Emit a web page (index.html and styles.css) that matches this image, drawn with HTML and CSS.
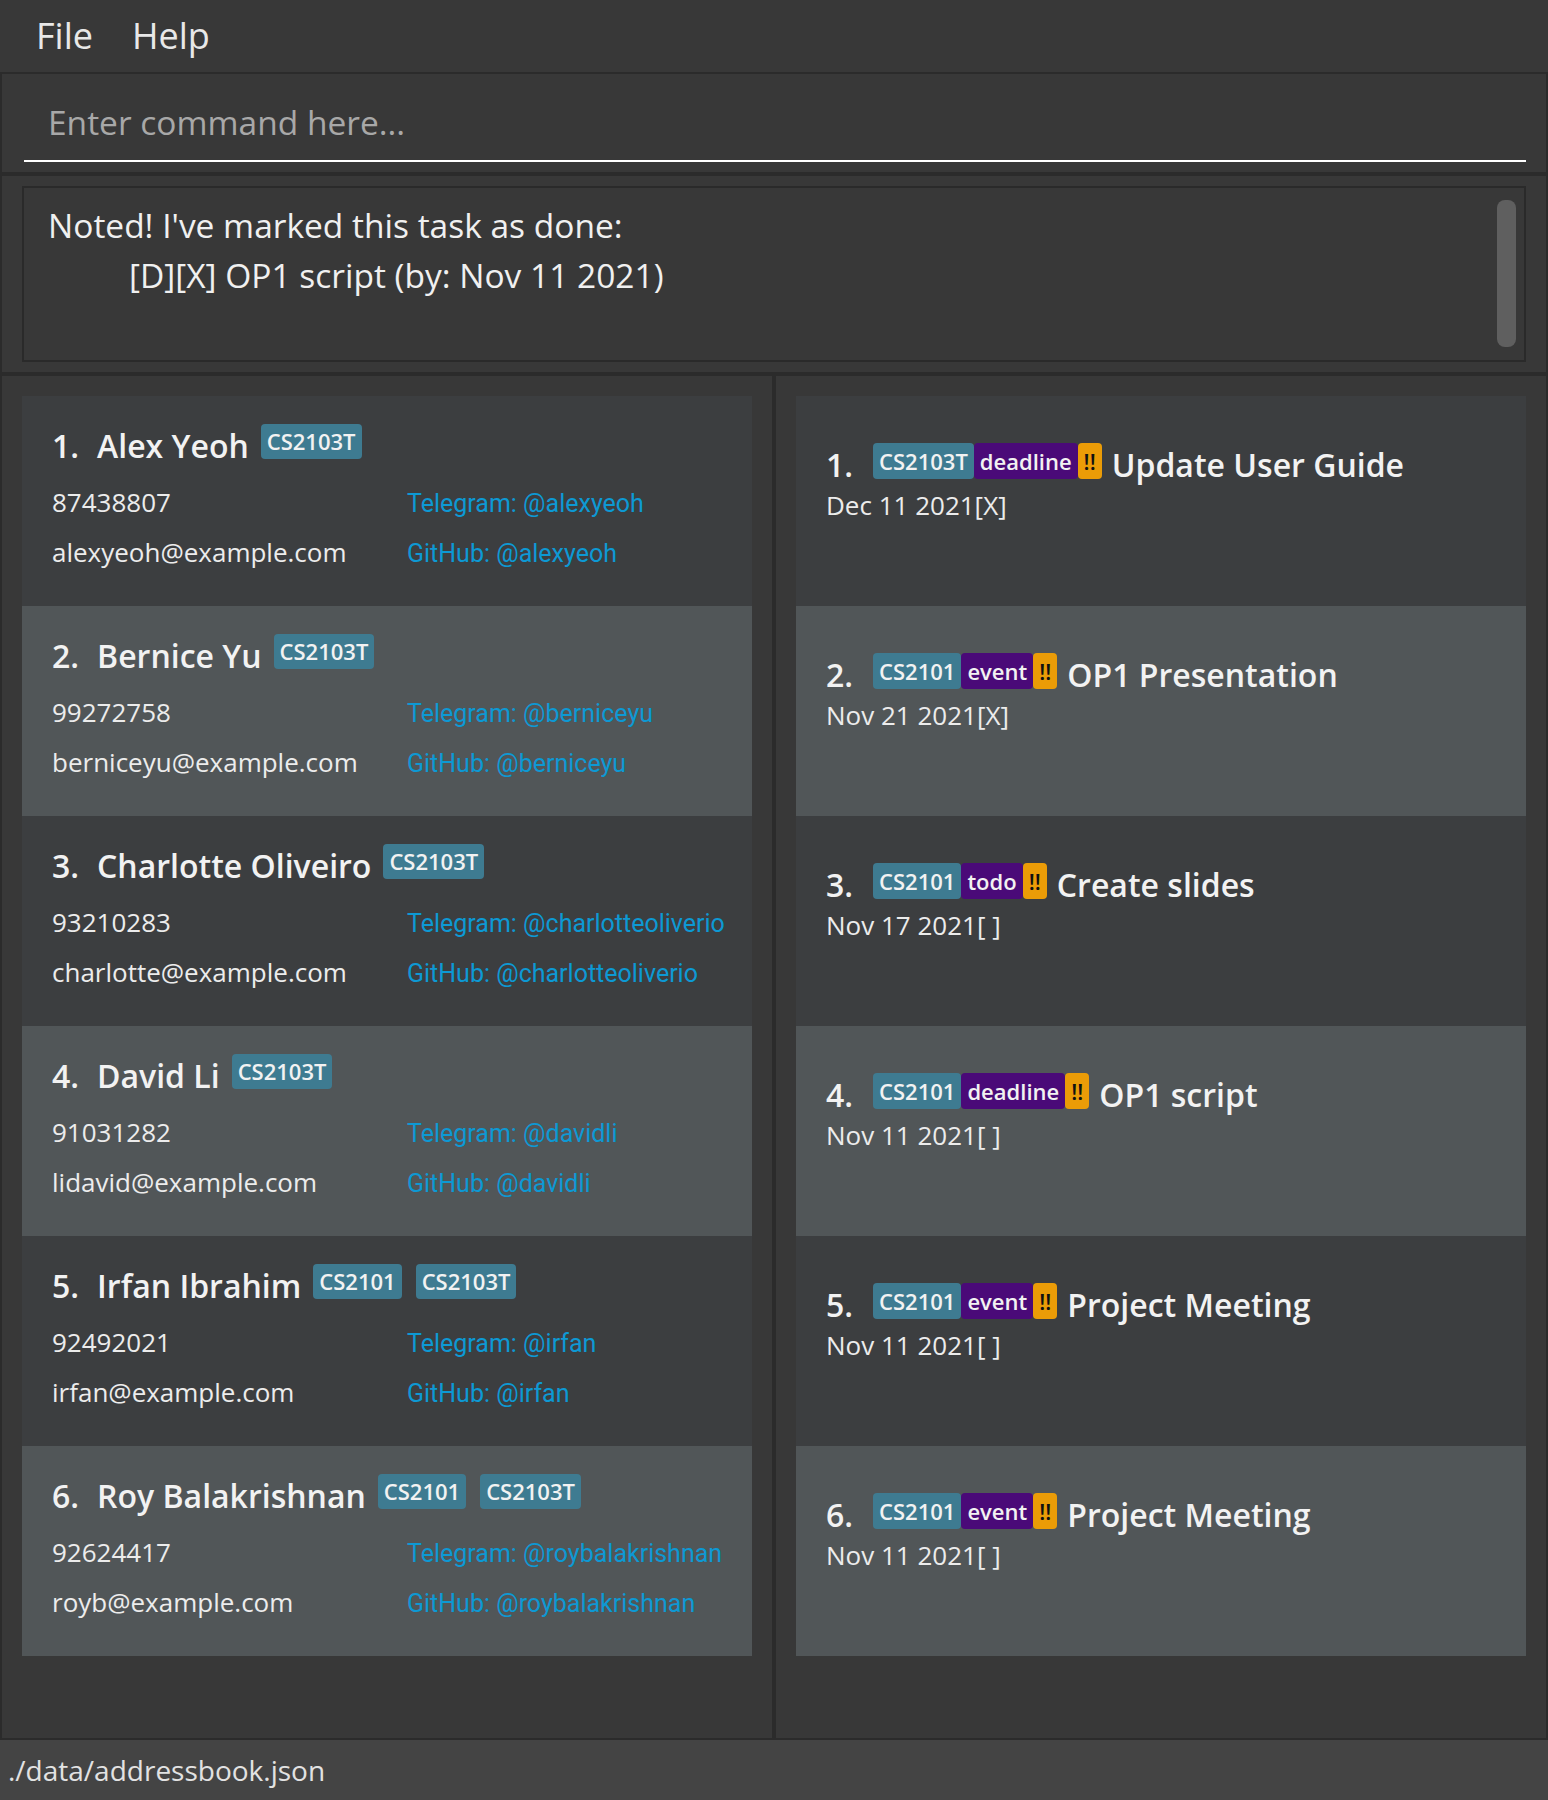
FILE: index.html
```html
<!DOCTYPE html>
<html>
<head>
<meta charset="utf-8">
<link rel="stylesheet" href="styles.css">
</head>
<body>
<div class="app">
  <div class="menubar">
    <span class="menu">File</span>
    <span class="menu">Help</span>
  </div>
  <div class="pane command-pane">
    <input class="command-input" type="text" placeholder="Enter command here...">
  </div>
  <div class="pane result-pane">
    <div class="result-box">
      <div class="result-text">
        <div>Noted! I've marked this task as done:</div>
        <div class="indent">[D][X] OP1 script (by: Nov 11 2021)</div>
      </div>
      <div class="scroll-thumb"></div>
    </div>
  </div>
  <div class="lists">
    <div class="list-panel persons">
      <div class="card odd">
        <div class="name-row"><span class="idx">1.</span><span class="name">Alex Yeoh</span><span class="tag">CS2103T</span></div>
        <div class="details"><span>87438807</span><span class="link">Telegram: @alexyeoh</span><span>alexyeoh@example.com</span><span class="link">GitHub: @alexyeoh</span></div>
      </div>
      <div class="card even">
        <div class="name-row"><span class="idx">2.</span><span class="name">Bernice Yu</span><span class="tag">CS2103T</span></div>
        <div class="details"><span>99272758</span><span class="link">Telegram: @berniceyu</span><span>berniceyu@example.com</span><span class="link">GitHub: @berniceyu</span></div>
      </div>
      <div class="card odd">
        <div class="name-row"><span class="idx">3.</span><span class="name">Charlotte Oliveiro</span><span class="tag">CS2103T</span></div>
        <div class="details"><span>93210283</span><span class="link">Telegram: @charlotteoliverio</span><span>charlotte@example.com</span><span class="link">GitHub: @charlotteoliverio</span></div>
      </div>
      <div class="card even">
        <div class="name-row"><span class="idx">4.</span><span class="name">David Li</span><span class="tag">CS2103T</span></div>
        <div class="details"><span>91031282</span><span class="link">Telegram: @davidli</span><span>lidavid@example.com</span><span class="link">GitHub: @davidli</span></div>
      </div>
      <div class="card odd">
        <div class="name-row"><span class="idx">5.</span><span class="name">Irfan Ibrahim</span><span class="tag">CS2101</span><span class="tag">CS2103T</span></div>
        <div class="details"><span>92492021</span><span class="link">Telegram: @irfan</span><span>irfan@example.com</span><span class="link">GitHub: @irfan</span></div>
      </div>
      <div class="card even">
        <div class="name-row"><span class="idx">6.</span><span class="name">Roy Balakrishnan</span><span class="tag">CS2101</span><span class="tag">CS2103T</span></div>
        <div class="details"><span>92624417</span><span class="link">Telegram: @roybalakrishnan</span><span>royb@example.com</span><span class="link">GitHub: @roybalakrishnan</span></div>
      </div>
    </div>
    <div class="list-panel tasks">
      <div class="card odd task">
        <div class="title-row"><span class="idx">1.</span><span class="ttag mod">CS2103T</span><span class="ttag kind">deadline</span><span class="ttag prio">!!</span><span class="title">Update User Guide</span></div>
        <div class="date">Dec 11 2021[X]</div>
      </div>
      <div class="card even task">
        <div class="title-row"><span class="idx">2.</span><span class="ttag mod">CS2101</span><span class="ttag kind">event</span><span class="ttag prio">!!</span><span class="title">OP1 Presentation</span></div>
        <div class="date">Nov 21 2021[X]</div>
      </div>
      <div class="card odd task">
        <div class="title-row"><span class="idx">3.</span><span class="ttag mod">CS2101</span><span class="ttag kind">todo</span><span class="ttag prio">!!</span><span class="title">Create slides</span></div>
        <div class="date">Nov 17 2021[ ]</div>
      </div>
      <div class="card even task">
        <div class="title-row"><span class="idx">4.</span><span class="ttag mod">CS2101</span><span class="ttag kind">deadline</span><span class="ttag prio">!!</span><span class="title">OP1 script</span></div>
        <div class="date">Nov 11 2021[ ]</div>
      </div>
      <div class="card odd task">
        <div class="title-row"><span class="idx">5.</span><span class="ttag mod">CS2101</span><span class="ttag kind">event</span><span class="ttag prio">!!</span><span class="title">Project Meeting</span></div>
        <div class="date">Nov 11 2021[ ]</div>
      </div>
      <div class="card even task">
        <div class="title-row"><span class="idx">6.</span><span class="ttag mod">CS2101</span><span class="ttag kind">event</span><span class="ttag prio">!!</span><span class="title">Project Meeting</span></div>
        <div class="date">Nov 11 2021[ ]</div>
      </div>
    </div>
  </div>
  <div class="statusbar">./data/addressbook.json</div>
</div>
</body>
</html>
```

FILE: styles.css
```css
* { box-sizing: border-box; }

html, body {
  margin: 0;
  padding: 0;
  background: #383838;
}

.app {
  width: 1548px;
  height: 1800px;
  display: flex;
  flex-direction: column;
  font-family: "Open Sans", "Noto Sans", sans-serif;
  color: #eeeeee;
}

.menubar {
  height: 72px;
  flex: 0 0 72px;
  display: flex;
  align-items: center;
  padding-left: 18px;
  background: #383838;
}

.menu {
  font-size: 36px;
  line-height: 72px;
  padding: 0 21px 0 18px;
  color: #e8e8e8;
}

.pane {
  background: #383838;
  border: 2px solid #2b2b2b;
}

.command-pane {
  flex: 0 0 102px;
  padding: 14px 20px 10px 22px;
}

.command-input {
  display: block;
  width: 100%;
  height: 74px;
  margin: 0;
  padding: 0 0 4px 24px;
  border: none;
  border-bottom: 2px solid #ffffff;
  background: transparent;
  font-family: "Open Sans", sans-serif;
  font-size: 33.5px;
  color: #eeeeee;
  outline: none;
}

.command-input::placeholder {
  color: #a8a8a8;
}

.result-pane {
  flex: 0 0 200px;
  padding: 10px 20px 10px 20px;
}

.result-box {
  height: 176px;
  border: 2px solid #2a2a2a;
  display: flex;
}

.result-text {
  flex: 1;
  padding: 12px 0 0 24px;
  font-size: 33.5px;
  line-height: 50px;
  color: #f0f0f0;
}

.indent {
  padding-left: 81px;
}

.scroll-thumb {
  width: 19px;
  margin: 12px 8px 13px 0;
  border-radius: 8px;
  background: #5f5f5f;
}

.lists {
  flex: 0 0 1366px;
  display: flex;
  border: 2px solid #2b2b2b;
}

.list-panel {
  flex: 1;
  padding: 20px;
  background: #383838;
}

.persons {
  border-right: 4px solid #2b2b2b;
}

.card {
  height: 210px;
}

.card.odd { background: #3c3e40; }
.card.even { background: #515658; }

.card:not(.task) {
  padding: 28px 20px 0 30px;
}

.name-row, .title-row {
  display: flex;
  align-items: flex-start;
}

.idx {
  font-size: 32px;
  font-weight: 600;
  line-height: 44px;
  margin-right: 18px;
  color: #f2f2f2;
}

.task .idx {
  margin-right: 20px;
}

.name, .title {
  font-size: 32px;
  font-weight: 600;
  line-height: 44px;
  color: #f2f2f2;
  white-space: nowrap;
}

.tag {
  height: 35px;
  line-height: 35px;
  padding: 0 6px;
  margin-left: 12px;
  font-size: 22px;
  font-weight: 600;
  color: #f2f2f2;
  background: #3e7b91;
  border-radius: 4px;
}

.tag + .tag {
  margin-left: 14px;
}

.details {
  display: grid;
  grid-template-columns: 355px 1fr;
  align-items: baseline;
  margin-top: 9px;
  font-size: 26px;
  line-height: 50px;
  color: #ececec;
  white-space: nowrap;
}

.details > span:nth-child(n+3) {
  margin-top: -2px;
}

.link {
  font-family: Roboto, "Liberation Sans", sans-serif;
  font-size: 25px;
  color: #0d99d4;
}

.task {
  padding: 47px 20px 0 30px;
}

.ttag {
  height: 36px;
  line-height: 36px;
  padding: 0 6px;
  font-size: 22px;
  font-weight: 600;
  border-radius: 4px;
  color: #f2f2f2;
}

.ttag.mod { background: #3e7b91; }
.ttag.kind { background: #4a0a78; }
.ttag.prio { background: #eb9c07; color: #111111; }

.title {
  margin-left: 10px;
}

.date {
  margin-top: 1px;
  font-size: 26px;
  line-height: 35px;
  color: #ececec;
}

.statusbar {
  flex: 0 0 60px;
  height: 60px;
  background: #444444;
  padding-left: 8px;
  font-size: 28px;
  line-height: 60px;
  color: #e2e2e2;
}
```
